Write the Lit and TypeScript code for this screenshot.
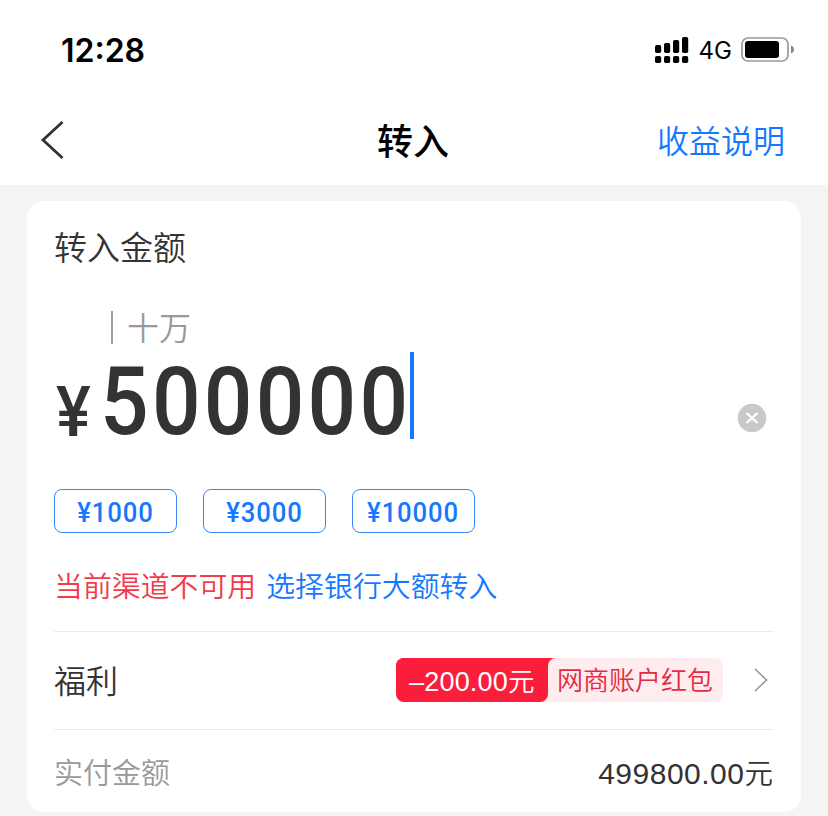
import { LitElement, html, css, svg } from "lit";
import { customElement } from "lit/decorators.js";

@customElement("status-bar")
class StatusBar extends LitElement {
  static styles = css`
    :host { display: flex; align-items: center; height: 100px; padding: 0 34px 0 61px; color: #000; font-family: Inter, "Liberation Sans", sans-serif; }
    .time { font-size: 32px; font-weight: 600; line-height: 40px; letter-spacing: 0; margin-right: auto; padding-top: 1px; }
    .net { font-size: 24px; font-weight: 400; line-height: 40px; margin: 0 9px 0 10px; padding-top: 1px; }
    .signal, .battery { display: block; flex: none; }
  `;
  render() {
    const xs = [0, 9, 18, 27];
    const tops = [8, 6, 3, 0];
    return html`
      <span class="time">12:28</span>
      <svg class="signal" width="34" height="26" viewBox="0 0 34 26">
        ${xs.map((x, i) => svg`
          <rect x=${x} y=${tops[i]} width="6.2" height=${16 - tops[i]} rx="1.8"></rect>
          <rect x=${x} y="19" width="6.2" height="7" rx="1.8"></rect>`)}
      </svg>
      <span class="net">4G</span>
      <svg class="battery" width="53" height="26" viewBox="0 0 53 26">
        <rect x="1" y="1" width="46" height="23" rx="6" fill="none" stroke="#999" stroke-width="1.7"></rect>
        <rect x="4" y="4" width="34" height="17" rx="3"></rect>
        <path d="M50 8.5c4 1.2 4 6.800 0 8z" fill="#888"></path>
      </svg>
    `;
  }
}

@customElement("nav-bar")
class NavBar extends LitElement {
  static styles = css`
    :host { display: grid; grid-template-columns: 1fr auto 1fr; align-items: center; height: 85px; padding: 0 43px 5px 40px; box-sizing: border-box; font-family: Inter, "Noto Sans CJK SC", sans-serif; }
    .title { font-size: 36px; line-height: 52px; font-weight: 500; color: #000; padding: 4px 0 0 1px; }
    .link { justify-self: end; font-size: 32px; line-height: 48px; font-weight: 350; color: #1677ff; padding-top: 3px; }
    .back { display: block; }
  `;
  render() {
    return html`
      <svg class="back" width="24" height="38" viewBox="0 0 24 38" fill="none" stroke="#333" stroke-width="2.8"><path d="M22.500 1 3 19 22.500 37"></path></svg>
      <span class="title">转入</span>
      <span class="link">收益说明</span>
    `;
  }
}

@customElement("app-root")
class AppRoot extends LitElement {
  static styles = css`
    :host { display: block; height: 816px; overflow: hidden; background: #f4f4f4; color: #333; font-family: Inter, "Noto Sans CJK SC", sans-serif; font-weight: 350; }
    .top { background: #fff; height: 185px; }
    .card { box-sizing: border-box; margin: 16px 27px 0; height: 611px; padding: 0 27px; border-radius: 17px; background: #fff; }
    .label { height: 93px; padding-top: 23px; box-sizing: border-box; font-size: 33px; line-height: 48px; }
    .unit { display: flex; align-items: center; height: 66px; box-sizing: border-box; padding: 0 0 0 57px; color: #999; font-size: 32px; line-height: 48px; }
    .unit span { padding-top: 3px; }
    .tick { width: 2px; height: 33px; margin-right: 14px; background: #a0a0a0; }
    .amount { display: flex; align-items: flex-end; height: 79px; font-family: Roboto, "Liberation Sans", sans-serif; }
    .yen { width: 44px; padding-left: 2px; font-size: 71px; line-height: 79px; height: 67px; font-weight: 500; }
    .yen span, .digits span { display: inline-block; transform-origin: 0 50%; }
    .yen span { transform: scaleX(.92); }
    .digits { width: 310px; height: 76px; font-size: 94px; line-height: 79px; font-weight: 500; white-space: nowrap; }
    .digits span { transform: scaleX(.91); letter-spacing: 3.600px; }
    .caret { width: 4px; height: 87px; background: #1677ff; }
    .clear { display: block; margin: 0 7px 6px auto; }
    .quick { display: flex; gap: 26px; margin-top: 50px; }
    .chip { box-sizing: border-box; width: 123px; height: 44px; border: 1.3px solid #3a86f0; border-radius: 8px; background: #fff; color: #1677ff; font: 500 28.5px/42px Roboto, "Liberation Sans", sans-serif; text-align: center; padding: 2px 0 0; }
    .chip span { display: inline-block; transform: scaleX(.9); letter-spacing: 1px; }
    .notice { display: flex; gap: 10px; height: 98px; box-sizing: border-box; padding: 32px 0 0; font-size: 28.9px; line-height: 44px; }
    .error { color: #f23a4c; }
    .bank { color: #1677ff; }
    .row { display: flex; align-items: center; border-top: 1px solid #ebebeb; box-sizing: border-box; }
    .benefit { height: 98px; font-size: 32px; }
    .name { padding: 0 0 3px; }
    .coupon { display: flex; height: 44px; margin: 0 0 1px auto; border-radius: 8px; background: linear-gradient(#fa1e3c 50%, #ffecee 50%) 0 0 / 160px 100% no-repeat; line-height: 46px; }
    .off { box-sizing: border-box; width: 152px; padding-left: 13px; border-radius: 8px 0 8px 8px; background: #fa1e3c; color: #fff; font-size: 26.5px; white-space: nowrap; }
    .num { font-family: "Liberation Sans", sans-serif; font-weight: 400; }
    .off .num { font-size: 27px; letter-spacing: .2px; }
    .bag { box-sizing: border-box; width: 175px; padding-left: 9px; border-radius: 8px 8px 8px 0; background: #ffecee; color: #e52a45; font-size: 26px; }
    .chev { display: block; margin: 0 6px 1px 31px; }
    .pay { height: 83px; font-size: 29px; }
    .muted { color: #999; }
    .total { margin-left: auto; font-size: 28.5px; padding-right: 1px; }
    .total .num { font-size: 30px; letter-spacing: .5px; }
  `;
  render() {
    return html`
      <header class="top"><status-bar></status-bar><nav-bar></nav-bar></header>
      <main class="card">
        <div class="label">转入金额</div>
        <div class="unit"><i class="tick"></i><span>十万</span></div>
        <div class="amount">
          <div class="yen"><span>¥</span></div>
          <div class="digits"><span>500000</span></div>
          <i class="caret"></i>
          <svg class="clear" width="30" height="30" viewBox="0 0 30 30"><circle cx="15" cy="15" r="14.300" fill="#c9c9c9"></circle><path d="m9.500 10 11 10M20.500 10 9.500 20" stroke="#fff" stroke-width="2.200"></path></svg>
        </div>
        <div class="quick">
          ${["¥1000", "¥3000", "¥10000"].map((v) => html`<button class="chip"><span>${v}</span></button>`)}
        </div>
        <div class="notice"><span class="error">当前渠道不可用</span><span class="bank">选择银行大额转入</span></div>
        <div class="row benefit">
          <span class="name">福利</span>
          <div class="coupon"><span class="off"><span class="num">–200.00</span>元</span><span class="bag">网商账户红包</span></div>
          <svg class="chev" width="14" height="24" viewBox="0 0 14 24" fill="none" stroke="#999" stroke-width="1.700"><path d="m1 1 11.500 11L1 23"></path></svg>
        </div>
        <div class="row pay"><span class="muted">实付金额</span><span class="total"><span class="num">499800.00</span>元</span></div>
      </main>
    `;
  }
}
